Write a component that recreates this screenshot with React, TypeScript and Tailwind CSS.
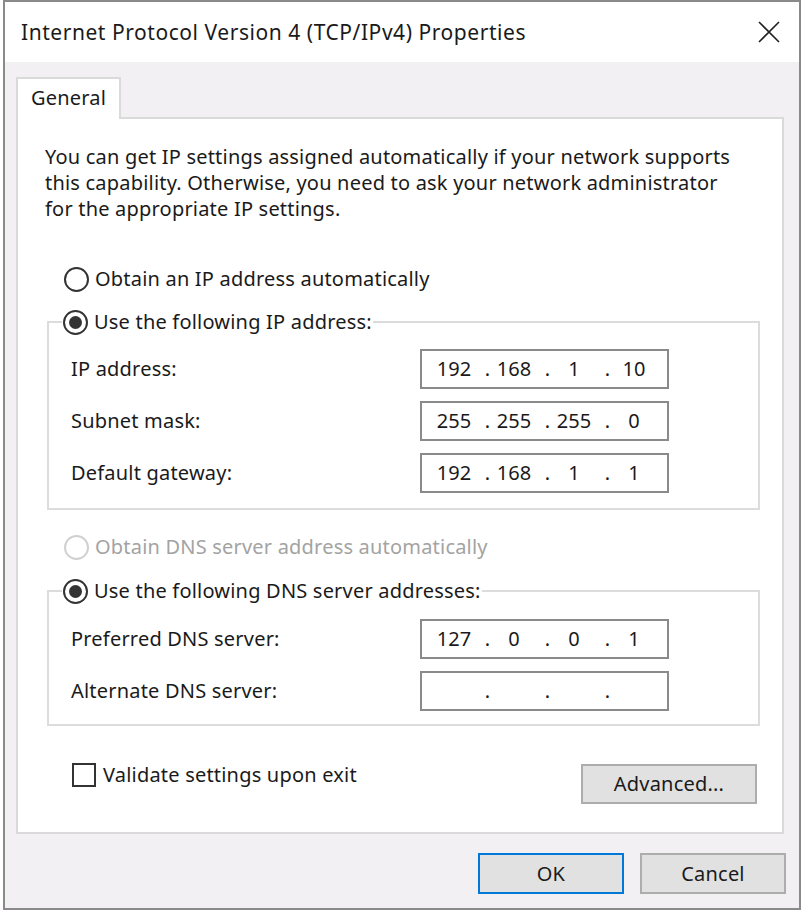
import React, { FC } from "react";

const Radio: FC<{ checked?: boolean; disabled?: boolean }> = ({ checked, disabled }) => (
    <span
        className={
            disabled
                ? "w-[25px] h-[25px] rounded-full border-2 border-[#d0d0d0] bg-white flex items-center justify-center shrink-0"
                : "w-[25px] h-[25px] rounded-full border-2 border-[#333333] bg-white flex items-center justify-center shrink-0"
        }
    >
        {checked && <span className="w-[13px] h-[13px] rounded-full bg-[#333333]" />}
    </span>
);

const IpBox: FC<{ parts: string[] }> = ({ parts }) => (
    <div className="w-[249px] h-[40px] border-2 border-[#8a8a8a] bg-white flex items-center pl-[8px] tracking-[0px]">
        {parts.map((p, i) => (
            <React.Fragment key={i}>
                <span className="w-[48px] text-center">{p}</span>
                {i < 3 && <span className="w-[12px] text-right">.</span>}
            </React.Fragment>
        ))}
    </div>
);

const Field: FC<{ label: string; parts: string[] }> = ({ label, parts }) => (
    <div className="flex items-center h-[40px]">
        <span className="w-[349px]">{label}</span>
        <IpBox parts={parts} />
    </div>
);

const App: FC = () => {
    return (
        <div className="w-[804px] h-[912px] bg-white pl-[3px] font-['Noto_Sans',sans-serif] text-[20px] leading-[26px] tracking-[0.2px] text-[#1a1a1a]">
            <div className="w-[798px] h-[910px] border-2 border-[#8a8a8a] bg-[#f3f0f3] flex flex-col">
                {/* title bar */}
                <div className="h-[60px] bg-white flex items-center justify-between pl-[16px] pr-[18px]">
                    <span className="text-[21px] tracking-[0.55px]">Internet Protocol Version 4 (TCP/IPv4) Properties</span>
                    <svg width="24" height="24" viewBox="0 0 24 24" className="text-[#222]">
                        <path d="M2 2 L22 22 M22 2 L2 22" stroke="currentColor" strokeWidth="1.6" fill="none" />
                    </svg>
                </div>

                <div className="pl-[11px] pr-[13px] pt-[15px]">
                    {/* tab */}
                    <div className="relative z-10 -mb-[2px] w-[105px] h-[42px] border-2 border-b-0 border-[#dadada] bg-white pl-[13px] pb-[3px] flex items-center">
                        General
                    </div>

                    {/* panel */}
                    <div className="w-[768px] h-[717px] border-2 border-[#dadada] bg-white flex flex-col">
                        <p className="pl-[27px] pt-[25px] whitespace-nowrap">
                            You can get IP settings assigned automatically if your network supports
                            <br />
                            this capability. Otherwise, you need to ask your network administrator
                            <br />
                            for the appropriate IP settings.
                        </p>

                        <div className="mt-[44px] pl-[46px] h-[26px] flex items-center gap-[6px]">
                            <Radio />
                            <span>Obtain an IP address automatically</span>
                        </div>

                        <fieldset className="mt-[17px] ml-[29px] w-[713px] border-2 border-[#dcdcdc]">
                            <legend className="ml-[13px] px-[1px]">
                                <span className="flex items-center gap-[6px] h-[26px]">
                                    <Radio checked />
                                    <span>Use the following IP address:</span>
                                </span>
                            </legend>
                            <div className="pt-[14px] pb-[15px] pl-[22px] flex flex-col gap-[12px]">
                                <Field label="IP address:" parts={["192", "168", "1", "10"]} />
                                <Field label="Subnet mask:" parts={["255", "255", "255", "0"]} />
                                <Field label="Default gateway:" parts={["192", "168", "1", "1"]} />
                            </div>
                        </fieldset>

                        <div className="mt-[24px] pl-[46px] h-[26px] flex items-center gap-[6px] text-[#a3a3a3]">
                            <Radio disabled />
                            <span>Obtain DNS server address automatically</span>
                        </div>

                        <fieldset className="mt-[18px] ml-[29px] w-[713px] border-2 border-[#dcdcdc]">
                            <legend className="ml-[13px] px-[1px]">
                                <span className="flex items-center gap-[6px] h-[26px]">
                                    <Radio checked />
                                    <span>Use the following DNS server addresses:</span>
                                </span>
                            </legend>
                            <div className="pt-[15px] pb-[13px] pl-[22px] flex flex-col gap-[12px]">
                                <Field label="Preferred DNS server:" parts={["127", "0", "0", "1"]} />
                                <Field label="Alternate DNS server:" parts={["", "", "", ""]} />
                            </div>
                        </fieldset>

                        <div className="mt-[37px] pl-[54px] pr-[25px] flex items-start justify-between">
                            <label className="flex items-center gap-[7px] h-[24px]">
                                <span className="w-[24px] h-[24px] border-2 border-[#333333] bg-white" />
                                <span>Validate settings upon exit</span>
                            </label>
                            <button className="mt-[1px] w-[176px] h-[40px] border-2 border-[#adadad] bg-[#e1e1e1]">
                                Advanced...
                            </button>
                        </div>
                    </div>

                    {/* dialog buttons */}
                    <div className="mt-[19px] flex justify-end gap-[16px]">
                        <button className="w-[146px] h-[41px] border-2 border-[#0078d7] bg-[#e1e1e1]">OK</button>
                        <button className="w-[146px] h-[41px] border-2 border-[#adadad] bg-[#e1e1e1]">Cancel</button>
                    </div>
                </div>
            </div>
        </div>
    );
};

export default App;
